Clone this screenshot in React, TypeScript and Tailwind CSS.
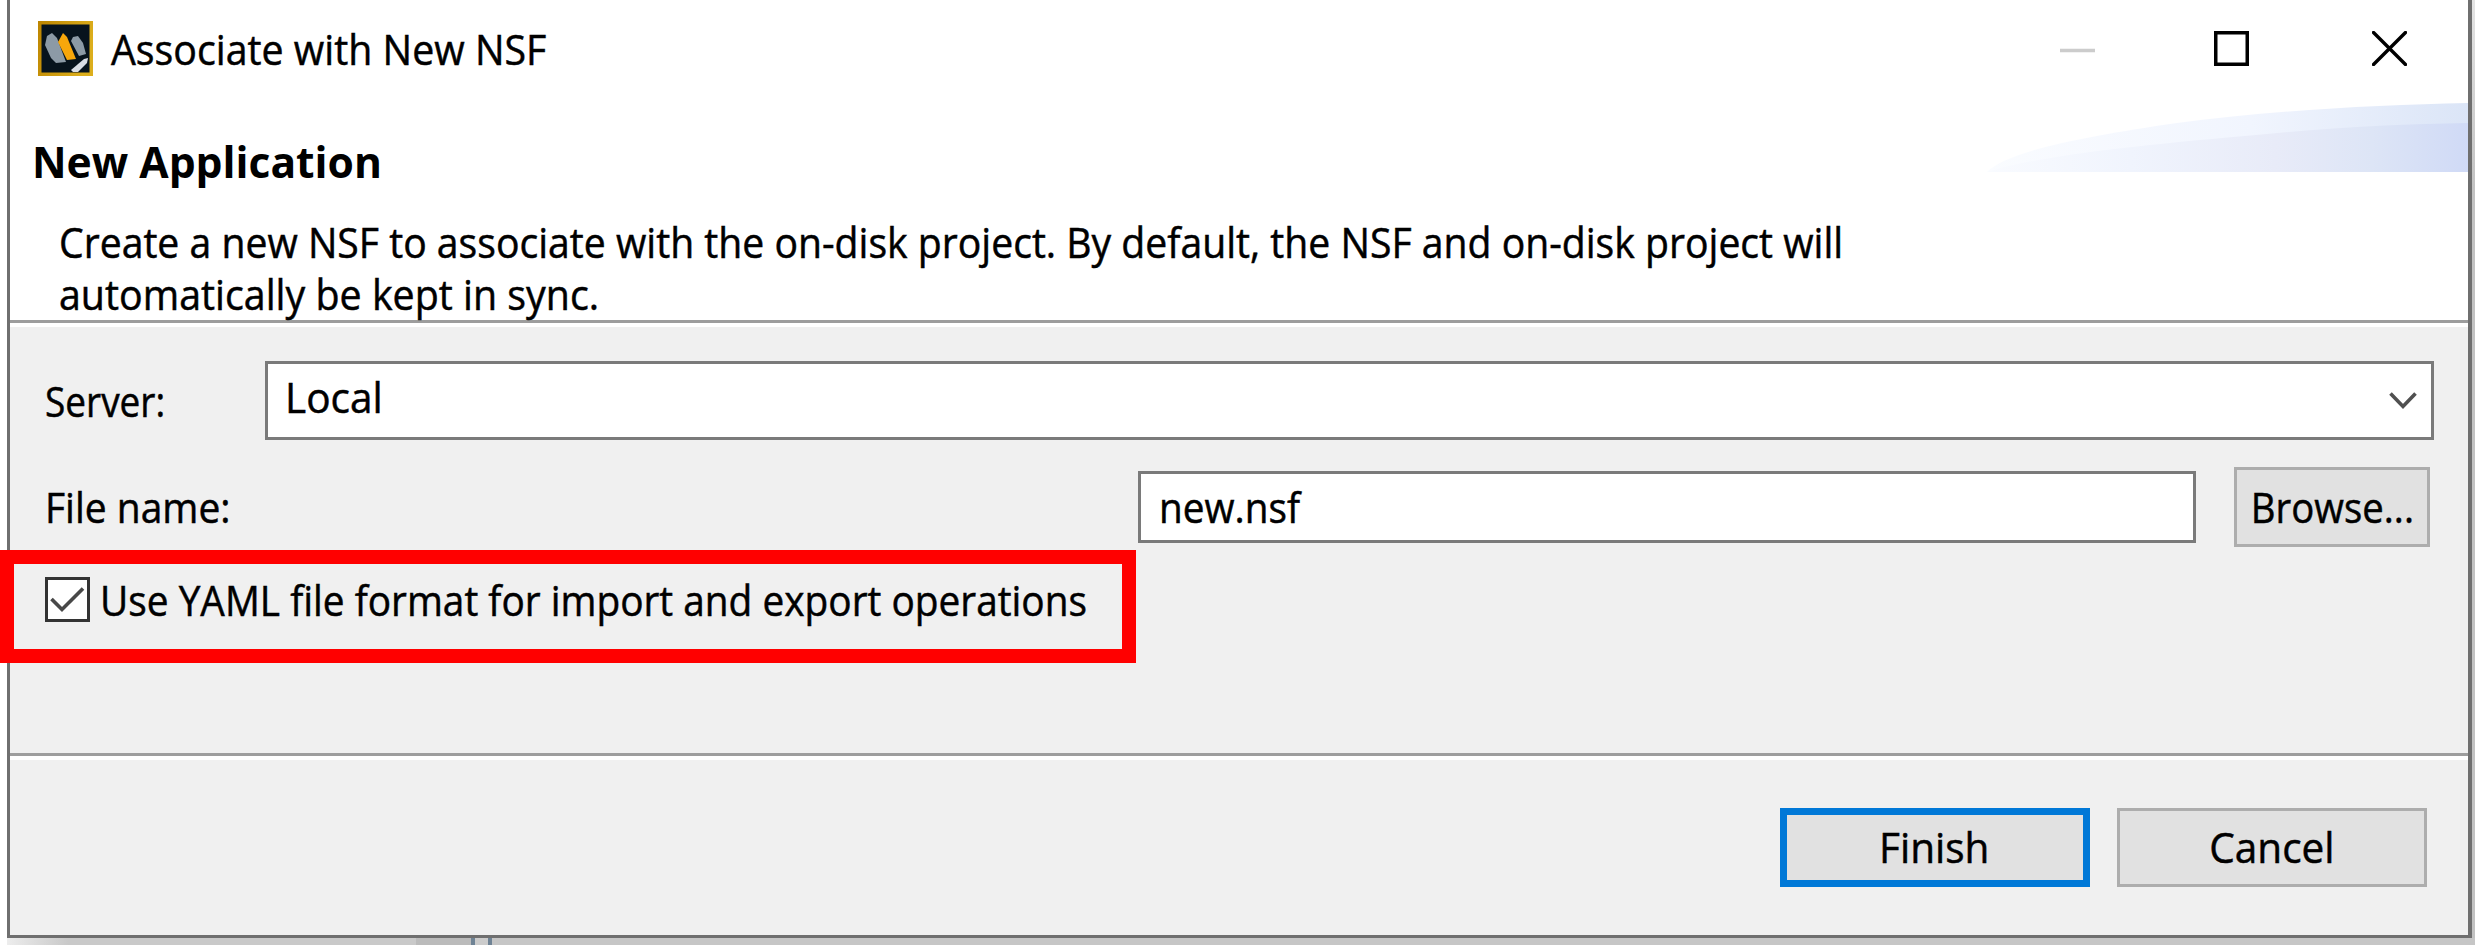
import React from 'react';
import clsx from 'clsx';

type LabelProps = {
  children: React.ReactNode;
  className?: string;
};

const Label = ({ children, className }: LabelProps) => (
  <span
    className={clsx(
      'inline-block whitespace-nowrap text-[42px] leading-[52px] [-webkit-text-stroke:0.5px_black]',
      className
    )}
  >
    {children}
  </span>
);

const Separator = () => (
  <div>
    <div className="h-[3px] bg-[#9d9d9d]" />
    <div className="h-1 bg-white" />
  </div>
);

const AppIcon = () => (
  <svg viewBox="0 0 55 55" className="w-[55px] h-[55px]">
    <defs>
      <linearGradient id="frame" x1="0" y1="0" x2="1" y2="0.3">
        <stop offset="0" stopColor="#bd8500" />
        <stop offset="1" stopColor="#dcae1c" />
      </linearGradient>
    </defs>
    <rect width="55" height="55" fill="url(#frame)" />
    <rect x="3.5" y="3.5" width="48" height="48" fill="#07131d" />
    <path d="M7 24 L9 15 L14 12 L19 17 L28 41 L18 42 L13 37 Z" fill="#8c9aa6" />
    <path d="M33 20 L35 16 L40 15 L45 22 L48 33 L41 35 Z" fill="#8c9aa6" />
    <path d="M20 21 L25 12 L29 16 L38 38 L29 39 Z" fill="#f8a70b" />
    <path d="M33 49 L46 38 L50 37 L49 42 L40 51 L35 51 Z" fill="#d9dde5" />
  </svg>
);

const HeaderSwoosh = () => (
  <svg viewBox="0 0 481 69" className="absolute top-[103px] right-0 w-[481px] h-[69px]">
    <defs>
      <linearGradient id="swooshBack" x1="0" y1="0" x2="1" y2="0">
        <stop offset="0" stopColor="#fafcff" />
        <stop offset="0.55" stopColor="#f1f5fe" />
        <stop offset="1" stopColor="#dbe5f7" />
      </linearGradient>
      <linearGradient id="swooshFront" x1="0" y1="0" x2="1" y2="0">
        <stop offset="0" stopColor="#f9fbff" />
        <stop offset="0.3" stopColor="#f0f4fd" />
        <stop offset="0.6" stopColor="#e8ebf8" />
        <stop offset="0.8" stopColor="#dde5f6" />
        <stop offset="1" stopColor="#d0daf6" />
      </linearGradient>
    </defs>
    <path d="M0 69 C20 48 100 33 190 20 C290 7 390 2 481 0 V69 Z" fill="url(#swooshBack)" />
    <path d="M0 69 C60 50 190 39 280 31 C350 24 420 21 481 20 V69 Z" fill="url(#swooshFront)" />
  </svg>
);

const WindowControls = () => (
  <div className="flex items-center mr-[61px]">
    <svg viewBox="0 0 35 35" className="w-[35px] h-[35px] mr-[119px]">
      <path d="M0 19.5 H35" stroke="#cccccc" strokeWidth="3.5" />
    </svg>
    <svg viewBox="0 0 35 35" className="w-[35px] h-[35px] mr-[123px]">
      <rect x="1.75" y="1.75" width="31.5" height="31.5" fill="none" stroke="#000" strokeWidth="3.5" />
    </svg>
    <svg viewBox="0 0 35 35" className="w-[35px] h-[35px]">
      <path d="M1.5 1.5 L33.5 33.5 M33.5 1.5 L1.5 33.5" stroke="#000" strokeWidth="3.4" strokeLinecap="round" />
    </svg>
  </div>
);

export default function App() {
  return (
    <div className="relative flex flex-col w-[2475px] h-[945px] overflow-hidden bg-white text-black font-['Open_Sans','Noto_Sans',sans-serif]">
      <div className="flex h-[938px]">
        <div className="relative flex flex-col w-[2465px] ml-[7px] border-l-[3px] border-r-4 border-b-[3px] border-[#6f6f6f] bg-[#f0f0f0]">
          <div className="bg-white h-[320px]">
            <div className="flex items-center justify-between h-[97px] pl-7">
              <div className="flex items-center">
                <AppIcon />
                <Label className="ml-[18px] mt-px origin-left scale-x-[0.936]">Associate with New NSF</Label>
              </div>
              <WindowControls />
            </div>
            <HeaderSwoosh />
            <h1 className="mt-[39px] ml-[22px] h-[52px]">
              <Label className="font-bold text-[43px] origin-left scale-x-[0.99] [-webkit-text-stroke:0px]">New Application</Label>
            </h1>
            <div className="flex flex-col items-start mt-[28px] ml-[49px]">
              <Label className="origin-left scale-x-[0.932]">
                Create a new NSF to associate with the on-disk project. By default, the NSF and on-disk project will
              </Label>
              <Label className="origin-left scale-x-[0.937]">automatically be kept in sync.</Label>
            </div>
          </div>
          <Separator />

          <div className="flex-1 pt-[34px] pl-8">
            <div className="flex items-center h-[79px]">
              <div className="w-[223px] pl-[3px]">
                <Label className="origin-left scale-x-[0.88]">Server:</Label>
              </div>
              <div className="flex items-center justify-between w-[2169px] h-[79px] pl-[17px] pr-[14px] border-[3px] border-[#7a7a7a] bg-white">
                <Label className="mb-[8px] origin-left scale-x-[0.965]">Local</Label>
                <svg viewBox="0 0 28 18" className="w-7 h-[18px]">
                  <path d="M1.5 1.5 L14 14.5 L26.5 1.5" fill="none" stroke="#505050" strokeWidth="3.6" />
                </svg>
              </div>
            </div>

            <div className="flex items-center h-20 mt-[27px]">
              <div className="w-[1096px] pl-[3px]">
                <Label className="origin-left scale-x-[0.928]">File name:</Label>
              </div>
              <div className="flex items-center w-[1058px] h-[72px] pl-[18px] border-[3px] border-[#7a7a7a] bg-white">
                <Label className="origin-left scale-x-[0.922]">new.nsf</Label>
              </div>
              <button className="flex items-center justify-center w-[196px] h-20 ml-[38px] border-[3px] border-[#adadad] bg-[#e1e1e1]">
                <Label className="scale-x-[0.912]">Browse...</Label>
              </button>
            </div>

            <div className="flex items-center h-[45px] mt-[30px] pl-[3px]">
              <svg viewBox="0 0 45 45" className="w-[45px] h-[45px]">
                <rect x="1.5" y="1.5" width="42" height="42" fill="#fff" stroke="#333" strokeWidth="3" />
                <path d="M6.5 22 L17 32.5 L38 11.5" fill="none" stroke="#484848" strokeWidth="3.6" />
              </svg>
              <Label className="ml-[10px] origin-left scale-x-[0.924]">
                Use YAML file format for import and export operations
              </Label>
            </div>
          </div>
          <Separator />

          <div className="flex items-start justify-end gap-[27px] h-[175px] pt-[48px] pr-[41px]">
            <button className="flex items-center justify-center w-[310px] h-[79px] border-[7px] border-[#0078d7] bg-[#e1e1e1]">
              <Label className="mr-[2px] mb-px scale-x-[0.965]">Finish</Label>
            </button>
            <button className="flex items-center justify-center w-[310px] h-[79px] border-[3px] border-[#adadad] bg-[#e1e1e1]">
              <Label className="mb-px scale-x-[0.965]">Cancel</Label>
            </button>
          </div>
        </div>
        <div className="flex-1 bg-linear-to-b from-[#e4e4e4] from-0% to-[#c2c2c2] to-20%" />
      </div>

      {/* strip of the window behind */}
      <div className="flex h-[7px] ml-[7px]">
        <div className="w-[409px] bg-linear-to-r from-[#ededed] from-0% to-[#c9c9c9] to-15%" />
        <div className="w-[55px] bg-[#bbbbbb]" />
        <div className="w-[4px] bg-[#6f8395]" />
        <div className="w-[13px] bg-[#cccccc]" />
        <div className="w-[4px] bg-[#6f8395]" />
        <div className="flex-1 bg-[#c6c6c6]" />
      </div>

      {/* highlight around the YAML option */}
      <div className="absolute left-0 top-[550px] w-[1136px] h-[113px] border-[14px] border-[#ff0000]" />
    </div>
  );
}
